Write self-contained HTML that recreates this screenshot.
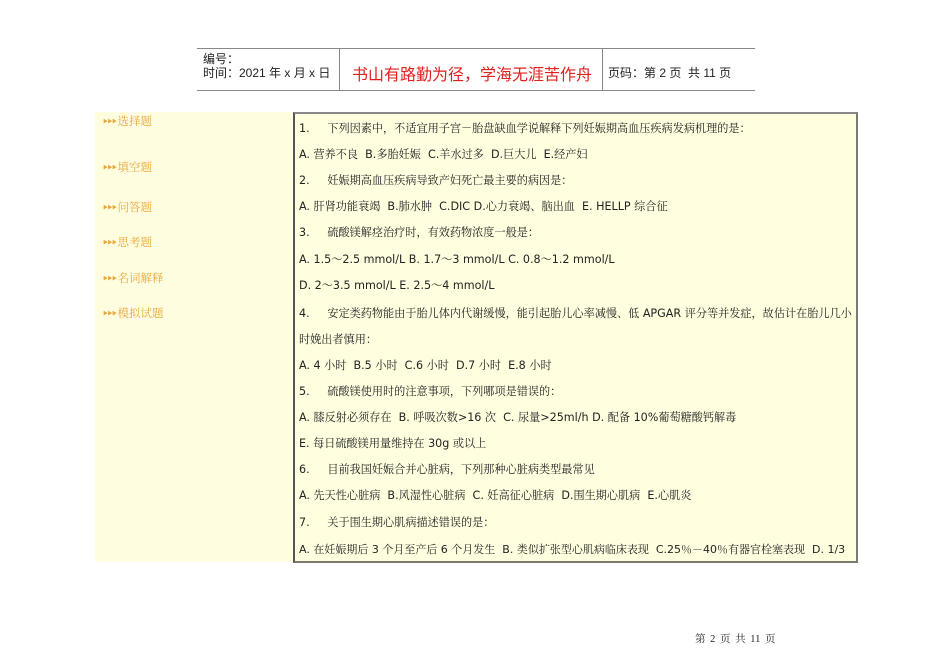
<!DOCTYPE html>
<html><head><meta charset="utf-8"><style>
body{margin:0;width:950px;height:672px;background:#fff;position:relative;overflow:hidden;font-family:"DejaVu Sans","Noto Serif CJK SC",serif;}
.a{position:absolute;white-space:nowrap}
.hl{position:absolute;background:#888;height:1px}
.vl{position:absolute;background:#888;width:1px}
.h{font-family:"Liberation Sans","Noto Sans CJK SC",sans-serif;font-size:12px;color:#222}
#left{position:absolute;left:95px;top:112px;width:199px;height:450px;background:#fffde0}
.m{position:absolute;left:103px;font-size:11.5px;color:#e8a83c;font-family:"Liberation Sans","Noto Serif CJK SC",serif}
.m b{font-size:5px;letter-spacing:-0.5px;vertical-align:2px;font-weight:normal;margin-right:1px}
#box{position:absolute;left:293px;top:112px;width:561px;height:447px;background:#ffffe0;border:2px solid #7a7a70;border-top-color:#888;border-left-color:#555}
.t{position:absolute;left:4px;font-size:11.15px;color:#222;white-space:nowrap}
</style></head><body>
<div class="hl" style="left:197px;top:48px;width:558px"></div>
<div class="hl" style="left:197px;top:90px;width:558px"></div>
<div class="vl" style="left:339px;top:48px;height:42px"></div>
<div class="vl" style="left:602px;top:48px;height:42px"></div>
<div class="a h" style="left:203px;top:50px">编号：</div>
<div class="a h" style="left:203px;top:64px">时间：2021 年 x 月 x 日</div>
<div class="a" style="left:352px;top:61px;font-size:16px;color:#e0201c;font-family:'Liberation Sans','Noto Sans CJK SC',sans-serif">书山有路勤为径，学海无涯苦作舟</div>
<div class="a h" style="left:608px;top:64px">页码：第 2 页&nbsp; 共 11 页</div>

<div id="left"></div>
<div class="m" style="top:113px"><b>▶▶▶</b>选择题</div>
<div class="m" style="top:159px"><b>▶▶▶</b>填空题</div>
<div class="m" style="top:199px"><b>▶▶▶</b>问答题</div>
<div class="m" style="top:234px"><b>▶▶▶</b>思考题</div>
<div class="m" style="top:270px"><b>▶▶▶</b>名词解释</div>
<div class="m" style="top:305px"><b>▶▶▶</b>模拟试题</div>

<div id="box">
<div class="t" style="top:6px">1.&nbsp;&nbsp;&nbsp;&nbsp; 下列因素中，不适宜用子宫－胎盘缺血学说解释下列妊娠期高血压疾病发病机理的是：</div>
<div class="t" style="top:32px">A. 营养不良&nbsp; B.多胎妊娠&nbsp; C.羊水过多&nbsp; D.巨大儿&nbsp; E.经产妇</div>
<div class="t" style="top:58px">2.&nbsp;&nbsp;&nbsp;&nbsp; 妊娠期高血压疾病导致产妇死亡最主要的病因是：</div>
<div class="t" style="top:84px">A. 肝肾功能衰竭&nbsp; B.肺水肿&nbsp; C.DIC D.心力衰竭、脑出血&nbsp; E. HELLP 综合征</div>
<div class="t" style="top:110px">3.&nbsp;&nbsp;&nbsp;&nbsp; 硫酸镁解痉治疗时，有效药物浓度一般是：</div>
<div class="t" style="top:137px">A. 1.5～2.5 mmol/L B. 1.7～3 mmol/L C. 0.8～1.2 mmol/L</div>
<div class="t" style="top:163px">D. 2～3.5 mmol/L E. 2.5～4 mmol/L</div>
<div class="t" style="top:191px">4.&nbsp;&nbsp;&nbsp;&nbsp; 安定类药物能由于胎儿体内代谢缓慢，能引起胎儿心率减慢、低 APGAR 评分等并发症，故估计在胎儿几小</div>
<div class="t" style="top:217px">时娩出者慎用：</div>
<div class="t" style="top:243px">A. 4 小时&nbsp; B.5 小时&nbsp; C.6 小时&nbsp; D.7 小时&nbsp; E.8 小时</div>
<div class="t" style="top:269px">5.&nbsp;&nbsp;&nbsp;&nbsp; 硫酸镁使用时的注意事项，下列哪项是错误的：</div>
<div class="t" style="top:295px">A. 膝反射必须存在&nbsp; B. 呼吸次数&gt;16 次&nbsp; C. 尿量&gt;25ml/h D. 配备 10%葡萄糖酸钙解毒</div>
<div class="t" style="top:321px">E. 每日硫酸镁用量维持在 30g 或以上</div>
<div class="t" style="top:347px">6.&nbsp;&nbsp;&nbsp;&nbsp; 目前我国妊娠合并心脏病，下列那种心脏病类型最常见</div>
<div class="t" style="top:373px">A. 先天性心脏病&nbsp; B.风湿性心脏病&nbsp; C. 妊高征心脏病&nbsp; D.围生期心肌病&nbsp; E.心肌炎</div>
<div class="t" style="top:400px">7.&nbsp;&nbsp;&nbsp;&nbsp; 关于围生期心肌病描述错误的是：</div>
<div class="t" style="top:427px;font-size:11px">A. 在妊娠期后 3 个月至产后 6 个月发生&nbsp; B. 类似扩张型心肌病临床表现&nbsp; C.25％－40％有器官栓塞表现&nbsp; D. 1/3</div>
</div>

<div class="a" style="left:695px;top:631px;font-size:10.5px;color:#222;word-spacing:2px;font-family:'Liberation Serif','Noto Serif CJK SC',serif">第 2 页 共 11 页</div>
</body></html>
